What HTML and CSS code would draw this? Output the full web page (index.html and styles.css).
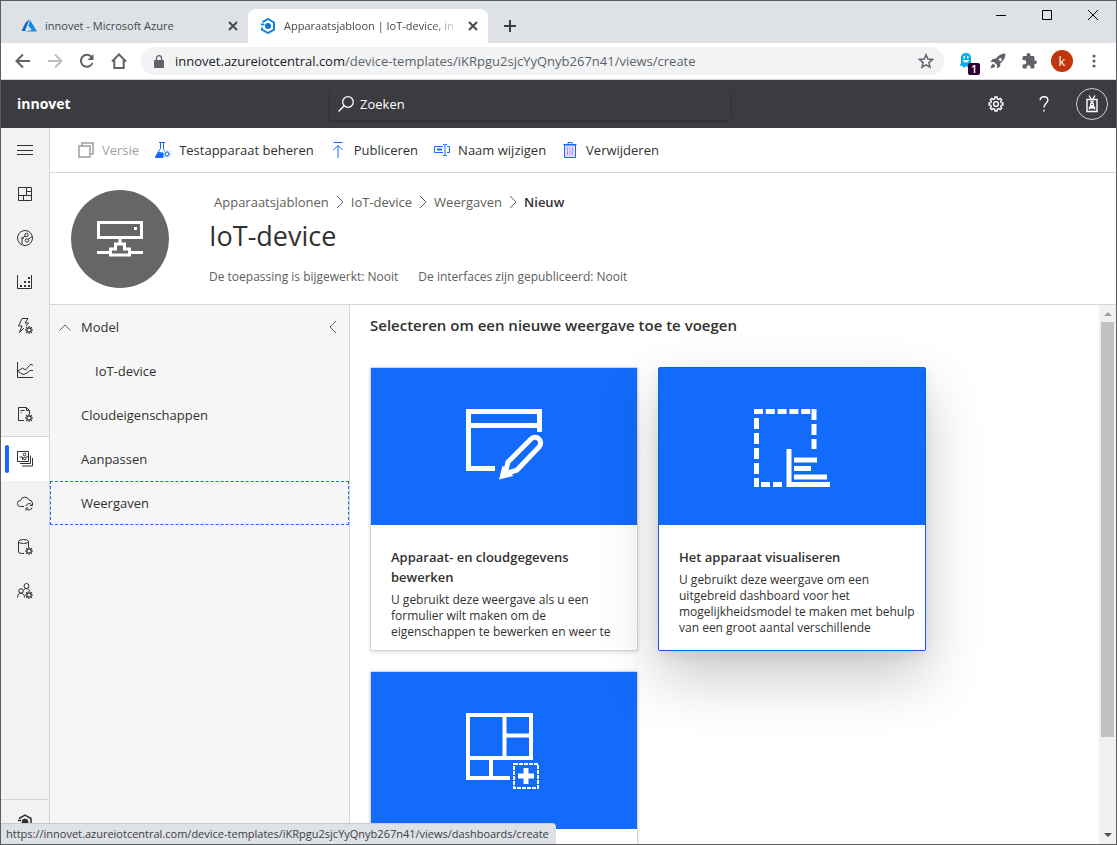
FILE: index.html
```html
<!DOCTYPE html>
<html lang="nl">
<head>
    <meta charset="UTF-8">
    <meta name="viewport" content="width=device-width, initial-scale=1.0">
    <title>Apparaatsjabloon | IoT-device, innovet</title>
    <link rel="stylesheet" href="styles.css">
</head>
<body>
    <svg class="defs" aria-hidden="true">
        <symbol id="gear" viewBox="0 0 16 16">
            <path d="M7 1h2l.4 1.9 1.3.5 1.6-1 1.4 1.4-1 1.6.5 1.3L15 7v2l-1.8.3-.5 1.3 1 1.6-1.4 1.4-1.6-1-1.3.6L9 15H7l-.4-1.8-1.3-.6-1.6 1-1.4-1.4 1-1.6-.5-1.3L1 9V7l1.8-.3.5-1.3-1-1.6 1.4-1.4 1.6 1 1.3-.5z"/>
            <circle cx="8" cy="8" r="2.4"/>
        </symbol>
        <symbol id="cog" viewBox="0 0 7 7">
            <circle cx="3.5" cy="3.5" r="1.9"/>
            <path d="M3.5 0v1.4M3.5 5.6V7M0 3.5h1.4M5.6 3.5H7M1 1l1 1M5 5l1 1M6 1L5 2M2 5L1 6"/>
        </symbol>
        <symbol id="chevron" viewBox="0 0 8 14"><path d="M1 1l6 6-6 6"/></symbol>
        <symbol id="close" viewBox="0 0 10 10"><path d="M1 1l8 8M9 1L1 9"/></symbol>
    </svg>

    <div class="tabs">
        <div class="tab">
            <svg class="favicon" viewBox="0 0 16 16"><path fill="#0f6cc0" d="M8.500 1L4.300 5 .5 13h3.500z"/><path fill="#1a8ae0" d="M9.100 2L7.300 7.400l3.500 4.600L4 13.500h12z"/></svg>
            <span class="tab-title">innovet - Microsoft Azure</span>
            <button class="tab-close" aria-label="Tabblad sluiten"><svg viewBox="0 0 10 10"><use href="#close"/></svg></button>
        </div>
        <div class="tab active">
            <svg class="favicon" viewBox="0 0 16 16"><path d="M2 9.500V11.600L8 15l6-3.400V4.500L8 1 2.500 4.200"/><path d="M1 6.500h3.500"/><circle cx="8" cy="8" r="3" fill="#0b76d8" stroke="none"/></svg>
            <span class="tab-title">Apparaatsjabloon | IoT-device, in</span>
            <button class="tab-close" aria-label="Tabblad sluiten"><svg viewBox="0 0 10 10"><use href="#close"/></svg></button>
        </div>
        <button class="new-tab" aria-label="Nieuw tabblad"><svg viewBox="0 0 12 12"><path d="M6 0v12M0 6h12"/></svg></button>
        <div class="window-buttons">
            <button aria-label="Minimaliseren"><svg viewBox="0 0 10 10"><path d="M0 5.500h10"/></svg></button>
            <button aria-label="Maximaliseren"><svg viewBox="0 0 10 10"><path d="M.5.5h9v9h-9z"/></svg></button>
            <button aria-label="Sluiten"><svg viewBox="0 0 10 10"><path d="M0 0l10 10M10 0L0 10"/></svg></button>
        </div>
    </div>

    <div class="browser-bar">
        <button aria-label="Vorige"><svg viewBox="0 0 16 16"><path d="M15 8H2M8 1.500L1.500 8 8 14.500"/></svg></button>
        <button class="off" aria-label="Volgende"><svg viewBox="0 0 16 16"><path d="M1 8h13M8 1.500L14.500 8 8 14.500"/></svg></button>
        <button aria-label="Vernieuwen"><svg viewBox="0 0 16 16"><path d="M13.500 10A6 6 0 1 1 12.600 4"/><path class="solid" d="M14.500 1v6h-6z"/></svg></button>
        <button aria-label="Startpagina"><svg viewBox="0 0 16 16"><path d="M1 8.500L8 1.500l7 7M3.300 7v8h9.400V7"/></svg></button>
        <div class="address">
            <svg class="lock" viewBox="0 0 10 13"><path d="M1 5h8a1 1 0 0 1 1 1v6a1 1 0 0 1-1 1H1a1 1 0 0 1-1-1V6a1 1 0 0 1 1-1z" fill="#5f6368"/><path d="M2.500 5V3.200a2.500 2.500 0 0 1 5 0V5" fill="none" stroke="#5f6368" stroke-width="1.300"/></svg>
            <span class="url"><b>innovet.azureiotcentral.com</b>/device-templates/iKRpgu2sjcYyQnyb267n41/views/create</span>
            <button aria-label="Bladwijzer"><svg viewBox="0 0 16 16"><path d="M8 1.800l1.800 4.300 4.700.4-3.600 3.100 1.100 4.600L8 11.800l-4 2.400 1.100-4.600L1.500 6.500l4.700-.4z"/></svg></button>
        </div>
        <div class="extensions">
            <button class="ghost" aria-label="Ghostery"><svg viewBox="0 0 14 16"><path fill="#00aef0" d="M7 0C3.500 0 2 2.300 2 5v5L.5 13 3 12.500 5 15l2-2 2.500 1.500L12 13V5c0-2.700-1.500-5-5-5z"/><path fill="#fff" d="M4.500 3h1.500v2.500H4.500zM8 3h1.500v2.500H8zM4 7h6c0 1.500-1.200 2.500-3 2.500S4 8.500 4 7z"/></svg><span class="badge">1</span></button>
            <button aria-label="Raket"><svg class="fill" viewBox="0 0 16 16"><path fill-rule="evenodd" d="M15.500.5C11 .5 8 2.500 6 5.500L2.500 6 .5 9 4 9l3 3v3.500l3-2 .5-3.500c3-2 5-5 5-9.500zM9.200 5.500a1.500 1.500 0 1 0 2.600 1.200 1.500 1.500 0 0 0-2.600-1.200z"/><path d="M3 10.500C1.500 11.500 1 13.500.5 15.500c2-.5 4-1 5-2.500z"/></svg></button>
            <button aria-label="Extensies"><svg class="fill" viewBox="0 0 16 16"><path d="M13.500 7.500h-1v-3c0-.8-.7-1.500-1.500-1.500H8.500V2a2 2 0 0 0-4 0v1H2c-.8 0-1.500.7-1.500 1.500V7H2a2 2 0 0 1 0 4.500H.5V14c0 .8.700 1.500 1.500 1.500h2.700V14.200a1.900 1.900 0 0 1 3.800 0v1.300H11c.8 0 1.500-.7 1.500-1.500v-3h1a1.800 1.800 0 0 0 0-3.500z"/></svg></button>
            <button class="profile">k</button>
            <button aria-label="Menu"><svg class="fill" viewBox="0 0 16 16"><circle cx="8" cy="3" r="1.600"/><circle cx="8" cy="8" r="1.600"/><circle cx="8" cy="13" r="1.600"/></svg></button>
        </div>
    </div>

    <header class="app-header">
        <a class="brand" href="#">innovet</a>
        <label class="search">
            <svg viewBox="0 0 16 16"><circle cx="10" cy="6" r="5.300"/><path d="M6.200 9.800L.5 15.500"/></svg>
            <input type="text" placeholder="Zoeken" aria-label="Zoeken">
        </label>
        <div class="header-actions">
            <button aria-label="Instellingen"><svg viewBox="0 0 16 16"><use href="#gear"/></svg></button>
            <button aria-label="Help"><svg viewBox="0 0 16 16"><path d="M4.200 4.200C4.200 2 5.700.7 8 .7s3.900 1.300 3.900 3.400c0 3-3.900 3.400-3.900 7.400M8 13.700v1.800"/></svg></button>
            <button class="account" aria-label="Account"><svg viewBox="0 0 16 18"><path d="M3 4.500h10v12H3zM5 .5l2.500 4M11 .5l-2.500 4M6.500 6.500h3"/><path d="M5.500 14.500v-2l1-1h3l1 1v2M6.500 13h3"/><circle cx="8" cy="9.500" r="1.500"/></svg></button>
        </div>
    </header>

    <div class="app">
        <nav class="rail">
            <a href="#" aria-label="Menu"><svg viewBox="0 0 16 16"><path d="M0 3.500h16M0 8.500h16M0 12.500h16"/></svg></a>
            <a href="#" aria-label="Dashboard"><svg viewBox="0 0 16 16"><path d="M1.500 1.500h13v13h-13zM9.500 1.500v8M1.500 9.500h13M9.500 5.500h5M6.500 9.500v5"/></svg></a>
            <a href="#" aria-label="Apparaten"><svg viewBox="0 0 16 16"><circle cx="8" cy="8" r="7.500"/><circle cx="9.500" cy="5" r="1.700"/><circle cx="10" cy="10.500" r="1.700"/><path d="M8 6L5 8.500V14M4 8h3M11.200 9.200L15 6.500"/></svg></a>
            <a href="#" aria-label="Apparaatgroepen"><svg viewBox="0 0 16 16"><path d="M.5 1v13.500h14V1"/><path stroke-width="2" d="M3 12h2M7 12h2M11 12h2M7 8h2M11 8h2M11 4h2"/></svg></a>
            <a href="#" aria-label="Regels"><svg viewBox="0 0 16 16"><path d="M5 .5h6L8 5h3.500L9 8M5 .5L1.500 8H5l-2.500 6.500L7 10"/><use href="#cog" x="8" y="8" width="8" height="8"/></svg></a>
            <a href="#" aria-label="Analyse"><svg viewBox="0 0 16 16"><path d="M.5 0v15.500H16M1 9l4.500-3 3 2L14 2l2 1.500M1 9.500l5 3 3-1 4-3h3"/></svg></a>
            <a href="#" aria-label="Taken"><svg viewBox="0 0 16 16"><path d="M7 14.500H1.500v-13h8l3 3V8M9.500 1.500v3h3M3.500 4.500h4M3.500 6.500h1"/><use href="#cog" x="8" y="8" width="8" height="8"/></svg></a>
            <a class="current" href="#" aria-label="Apparaatsjablonen"><svg viewBox="0 0 16 16"><path d="M.5.500h11v10H.5zM3 12.500h10.500v-8M5 15h10.500V7"/><circle cx="7.500" cy="3.500" r="1.300"/><circle cx="7.800" cy="7.500" r="1.300"/><path d="M2.500 6h3v3M9 6.500l2-1.500"/></svg></a>
            <a href="#" aria-label="Gegevens exporteren"><svg viewBox="0 0 16 16"><path d="M7 11.500H3.500a3 3 0 0 1-.2-6A4.600 4.600 0 0 1 12 5a3.200 3.200 0 0 1 3.300 3M9 11a3.200 3.200 0 0 1 5.800-1M15.500 8v2.500H13M15 12.500a3.200 3.200 0 0 1-5.500 1.500M9 15.500V13h2.500"/></svg></a>
            <a href="#" aria-label="Gegevens"><svg viewBox="0 0 16 16"><ellipse cx="6.500" cy="2.500" rx="5" ry="2"/><path d="M1.500 2.500V13c0 1 2 1.500 5.500 1.500M11.500 2.500V8"/><use href="#cog" x="8" y="8" width="8" height="8"/></svg></a>
            <a href="#" aria-label="Beheer"><svg viewBox="0 0 16 16"><circle cx="9.500" cy="3" r="2.500"/><circle cx="4" cy="8" r="2.300"/><path d="M.5 14.500c0-6 7-6 7 0M6.500 7c1-2 5-2 6.500 1"/><use href="#cog" x="8" y="8" width="8" height="8"/></svg></a>
            <a class="rail-bottom" href="#" aria-label="IoT Central"><svg viewBox="0 0 16 16"><path stroke-width="1.500" d="M2 9.500v2L8 15l6-3.500v-7L8 1 2 4.500M1 6.500h3"/><circle cx="8" cy="8" r="3" fill="#323130"/></svg></a>
        </nav>

        <main>
            <div class="commands">
                <button class="off" disabled><svg viewBox="0 0 16 16"><path stroke-width="1.500" d="M4 3.500V1h11v11h-3M1 4h11v11H1z"/></svg>Versie</button>
                <button><svg viewBox="0 0 16 16"><path d="M4 .5h6M5.500.5v6l-5 8.500H8M8.500.5v6l1 2"/><path d="M3 10.500L.5 15.500H8V11z" fill="#136bfb"/><use href="#cog" x="8" y="8.500" width="8" height="7"/></svg>Testapparaat beheren</button>
                <button><svg viewBox="0 0 16 16"><path d="M3.500.5h9M8 3.500V16M3.500 8L8 3.500 12.500 8"/></svg>Publiceren</button>
                <button><svg viewBox="0 0 16 16"><path d="M9 4.500H.5v6H9M13 4.500h2.500v6H13M9 2.500h1.500l.5.500.5-.5H13M11 3v10M9 13.500h1.500l.5-.5.5.5H13"/><path stroke-width="2" d="M3 7.500h5"/></svg>Naam wijzigen</button>
                <button><svg viewBox="0 0 16 16"><path fill="#e4dcff" d="M2.500 3h11v12.500h-11z"/><path d="M1.500 2.500h13M6 2V.5h4V2"/><path stroke="#b48cff" d="M5.500 5v8M8 5v8M10.500 5v8"/></svg>Verwijderen</button>
            </div>

            <section class="device">
                <div class="device-picture">
                    <svg viewBox="0 0 46 36"><path d="M1.500 1.500h43v15h-43zM23 17v6M0 31.500h13M33 31.500h13M13.500 34v-6h5v-5h9v5h5v6z"/><path d="M37 7.500h3"/></svg>
                </div>
                <div>
                    <div class="breadcrumb">
                        <a href="#">Apparaatsjablonen</a>
                        <svg viewBox="0 0 8 14"><use href="#chevron"/></svg>
                        <a href="#">IoT-device</a>
                        <svg viewBox="0 0 8 14"><use href="#chevron"/></svg>
                        <a href="#">Weergaven</a>
                        <svg viewBox="0 0 8 14"><use href="#chevron"/></svg>
                        <strong>Nieuw</strong>
                    </div>
                    <h1>IoT-device</h1>
                    <div class="device-info">
                        <span>De toepassing is bijgewerkt: Nooit</span>
                        <span>De interfaces zijn gepubliceerd: Nooit</span>
                    </div>
                </div>
            </section>

            <div class="workspace">
                <aside class="model">
                    <div class="model-head">
                        <button class="toggle"><svg viewBox="0 0 12 7"><path d="M.5 6.500L6 1l5.500 5.500"/></svg>Model</button>
                        <button class="collapse" aria-label="Inklappen"><svg viewBox="0 0 8 14"><path d="M7 1L1 7l6 6"/></svg></button>
                    </div>
                    <a class="child" href="#">IoT-device</a>
                    <a href="#">Cloudeigenschappen</a>
                    <a href="#">Aanpassen</a>
                    <a class="focused" href="#">Weergaven</a>
                </aside>

                <section class="views">
                    <h2>Selecteren om een nieuwe weergave toe te voegen</h2>
                    <div class="cards">
                        <a class="card" href="#">
                            <div class="card-picture"><svg viewBox="0 0 80 80"><path stroke-width="5" d="M31 61.500H4.500v-57h71V25"/><path stroke-width="5" d="M4.500 18.500h71"/><path stroke-width="5" d="M41 67l3-12 23-23a5 5 0 0 1 8 8L53 63z"/><path class="tip" d="M35 72.500l3.500-14 11 10.500z"/></svg></div>
                            <div class="card-text">
                                <h3>Apparaat- en cloudgegevens bewerken</h3>
                                <p>U gebruikt deze weergave als u een formulier wilt maken om de eigenschappen te bewerken en weer te</p>
                            </div>
                        </a>
                        <a class="card hovered" href="#">
                            <div class="card-picture"><svg viewBox="0 0 80 80"><path stroke-width="5" stroke-dasharray="9 2.800" d="M2 4.500h57"/><path stroke-width="5" stroke-dasharray="11 4" d="M62 2v40M4.500 11v70"/><path stroke-width="5" stroke-dasharray="9 3" d="M9 77.500h24"/><path stroke-width="5" d="M37 42v35.500h41"/><path stroke-width="5" d="M42 53h23M42 61.500h17M42 70h33"/></svg></div>
                            <div class="card-text">
                                <h3>Het apparaat visualiseren</h3>
                                <p>U gebruikt deze weergave om een uitgebreid dashboard voor het mogelijkheidsmodel te maken met behulp van een groot aantal verschillende</p>
                            </div>
                        </a>
                        <a class="card" href="#" aria-label="Standaardweergaven genereren">
                            <div class="card-picture"><svg viewBox="0 0 80 80"><path stroke-width="4" d="M46 67H4V4h63v43H4M40.500 4v43M40 24.500h27M27 47v20"/><path stroke-width="2" stroke-dasharray="4 1" d="M50 53h24v24H50z"/><path stroke-width="5" d="M62 57v16M54 65h16"/></svg></div>
                        </a>
                    </div>
                </section>

                <div class="scrollbar">
                    <svg viewBox="0 0 8 4"><path d="M0 4l4-4 4 4z" fill="#a3a3a3"/></svg>
                    <div class="thumb"></div>
                    <svg viewBox="0 0 8 4"><path d="M0 0l4 4 4-4z" fill="#505050"/></svg>
                </div>
            </div>
        </main>
    </div>
    <div class="status">https://innovet.azureiotcentral.com/device-templates/iKRpgu2sjcYyQnyb267n41/views/dashboards/create</div>
</body>
</html>
```
FILE: styles.css
```css
* {
    box-sizing: border-box;
}
body {
    font-family: "Segoe UI", "Open Sans", "Noto Sans", sans-serif;
    font-size: 13px;
    line-height: 20px;
    color: #323130;
    margin: 0;
    height: 100vh;
    display: flex;
    flex-direction: column;
    overflow: hidden;
    border: 1px solid #5c5d60;
    background: #fff;
}
svg {
    flex: none;
    display: block;
    width: 16px;
    height: 16px;
    fill: none;
    stroke: currentColor;
}
.defs {
    position: absolute;
    width: 0;
    height: 0;
}
button {
    font: inherit;
    color: inherit;
    background: none;
    border: none;
    padding: 0;
    display: flex;
    align-items: center;
    justify-content: center;
    cursor: pointer;
}
a {
    color: inherit;
    text-decoration: none;
}
h1, h2, h3, p {
    margin: 0;
}

/* browser */
.tabs {
    height: 42px;
    flex: none;
    display: flex;
    padding: 8px 0 0 8px;
    background: #dee1e6;
}
.tab {
    width: 239px;
    display: flex;
    align-items: center;
    gap: 8px;
    padding: 0 10px 0 12px;
    border-radius: 8px 8px 0 0;
    font-size: 11px;
    color: #45494d;
}
.tab.active {
    width: 240px;
    background: #fff;
}
.tab .favicon {
    stroke: none;
}
.tab.active .favicon {
    stroke: #1283e0;
    stroke-width: 2;
}
.tab-title {
    flex: 1;
    white-space: nowrap;
}
.active .tab-title {
    -webkit-mask-image: linear-gradient(to right, #000 84%, transparent);
    mask-image: linear-gradient(to right, #000 84%, transparent);
}
.tab-close svg {
    width: 10px;
    height: 10px;
    stroke-width: 2;
}
.new-tab {
    width: 44px;
    color: #3c4043;
}
.new-tab svg {
    width: 12px;
    height: 12px;
    stroke-width: 2;
}
.window-buttons {
    margin-left: auto;
    display: flex;
    align-items: flex-start;
    color: #000;
}
.window-buttons button {
    width: 46px;
    height: 12px;
}
.window-buttons svg {
    width: 10px;
    height: 10px;
}
.browser-bar {
    height: 37px;
    flex: none;
    display: flex;
    align-items: center;
    padding-left: 6px;
    border-bottom: 1px solid #d5d7da;
    color: #5f6368;
}
.browser-bar > button {
    width: 32px;
}
.browser-bar svg {
    stroke-width: 2;
}
.browser-bar .off {
    color: #babcbe;
}
.browser-bar .solid, .browser-bar .fill {
    fill: #5f6368;
    stroke: none;
}
.address {
    flex: 1;
    height: 28px;
    display: flex;
    align-items: center;
    gap: 11px;
    margin-left: 6px;
    padding: 0 10px 0 13px;
    border-radius: 14px;
    background: #f1f3f4;
}
.address .lock {
    width: 10px;
    height: 13px;
    stroke: none;
}
.address button svg {
    stroke-width: 1.5;
}
.url {
    flex: 1;
    white-space: nowrap;
    overflow: hidden;
}
.url b {
    font-weight: 400;
    color: #202124;
}
.extensions {
    display: flex;
    align-items: center;
    gap: 10px;
    padding: 0 11px;
}
.extensions button {
    width: 22px;
    height: 22px;
}
.ghost {
    position: relative;
}
.ghost svg {
    stroke: none;
}
.badge {
    position: absolute;
    left: 13px;
    top: 13px;
    width: 12px;
    height: 12px;
    border-radius: 2px;
    background: #330033;
    color: #fff;
    font-size: 10px;
    line-height: 12px;
    font-weight: 600;
}
.profile {
    border-radius: 50%;
    background: #bf360c;
    color: #fff;
}

/* app header */
.app-header {
    height: 48px;
    flex: none;
    display: flex;
    align-items: center;
    padding: 0 8px 0 16px;
    background: #3c3b40;
    color: #fff;
}
.brand {
    width: 312px;
    font-size: 14px;
    font-weight: 700;
}
.search {
    width: 401px;
    height: 32px;
    display: flex;
    align-items: center;
    gap: 6px;
    padding: 0 9px;
    border-radius: 2px;
    box-shadow: 0 1px 3px rgba(0, 0, 0, 0.25);
}
.search input {
    flex: 1;
    font: inherit;
    color: #fff;
    background: none;
    border: none;
    outline: none;
    padding: 0;
}
.search input::placeholder {
    color: #fff;
    opacity: 1;
}
.search svg {
    stroke-width: 1.3;
}
.header-actions {
    margin-left: auto;
    display: flex;
    align-items: center;
}
.header-actions button {
    width: 48px;
    height: 32px;
}
.header-actions svg {
    stroke-width: 1.4;
}
.header-actions .account {
    width: 32px;
    margin-left: 8px;
    border: 1px solid #d0d0d0;
    border-radius: 50%;
}
.account svg {
    height: 18px;
}

/* left rail */
.app {
    flex: 1;
    min-height: 0;
    display: flex;
}
.rail {
    width: 49px;
    flex: none;
    display: flex;
    flex-direction: column;
    background: #f3f2f1;
    border-right: 1px solid #d6d6d6;
}
.rail a {
    height: 44px;
    flex: none;
    display: flex;
    align-items: center;
    justify-content: center;
}
.rail .current {
    height: 45px;
    position: relative;
    border-top: 1px solid #d6d6d6;
    background: #fff;
}
.rail .current::before {
    content: "";
    position: absolute;
    left: 4px;
    top: 8px;
    width: 4px;
    height: 28px;
    border-radius: 2px;
    background: #136bfb;
}
.rail .rail-bottom {
    height: 45px;
    margin-top: auto;
    border-top: 1px solid #d6d6d6;
}

/* page */
main {
    flex: 1;
    min-width: 0;
    display: flex;
    flex-direction: column;
}
.commands {
    height: 45px;
    flex: none;
    display: flex;
    gap: 16px;
    padding-left: 28px;
    border-bottom: 1px solid #d6d6d6;
}
.commands button {
    gap: 8px;
}
.commands svg {
    color: #136bfb;
}
.commands .off, .commands .off svg {
    color: #a19f9d;
}
.device {
    height: 132px;
    flex: none;
    display: flex;
    padding: 17px 21px 0;
    gap: 40px;
    border-bottom: 1px solid #d6d6d6;
}
.device-picture {
    width: 98px;
    height: 98px;
    flex: none;
    display: flex;
    align-items: center;
    justify-content: center;
    border-radius: 50%;
    background: #666;
    color: #fff;
}
.device-picture svg {
    width: 46px;
    height: 36px;
    stroke-width: 3;
}
.breadcrumb {
    display: flex;
    align-items: center;
    gap: 7px;
    margin: 2px 0 0 5px;
    color: #605e5c;
}
.breadcrumb svg {
    width: 8px;
    height: 14px;
}
.breadcrumb strong {
    font-weight: 600;
    color: #323130;
}
h1 {
    font-size: 27px;
    line-height: 36px;
    font-weight: 400;
    margin-top: 6px;
}
.device-info {
    display: flex;
    gap: 20px;
    margin-top: 13px;
    font-size: 12px;
    color: #605e5c;
}
.workspace {
    flex: 1;
    min-height: 0;
    display: flex;
}
.model {
    width: 300px;
    flex: none;
    background: #f6f6f6;
    border-right: 1px solid #d6d6d6;
}
.model-head {
    display: flex;
    justify-content: space-between;
    padding: 0 12px 0 9px;
}
.model-head button {
    height: 44px;
}
.model-head svg {
    color: #605e5c;
}
.toggle {
    gap: 10px;
}
.toggle svg {
    width: 12px;
    height: 7px;
}
.collapse svg {
    width: 8px;
    height: 14px;
}
.model a {
    display: block;
    padding: 11px 30px;
    border: 1px dashed transparent;
    line-height: 20px;
}
.model .child {
    padding-left: 44px;
}
.model .focused {
    border-color: #136bfb;
}
.views {
    flex: 1;
    overflow: hidden;
    padding: 9px 20px 0;
}
h2 {
    font-size: 15px;
    font-weight: 600;
    line-height: 22px;
}
.cards {
    display: flex;
    flex-wrap: wrap;
    gap: 20px;
    margin-top: 31px;
}
.card {
    width: 268px;
    height: 284px;
    border: 1px solid #d6d6d6;
    border-radius: 2px;
    background: #fff;
    box-shadow: 0 1px 4px rgba(0, 0, 0, 0.14);
}
.card.hovered {
    position: relative;
    border-color: #0b63ce;
    box-shadow: 0 26px 58px rgba(0, 0, 0, 0.22), 0 5px 14px rgba(0, 0, 0, 0.06);
}
.card-picture {
    height: 157px;
    display: flex;
    align-items: center;
    justify-content: center;
    background: #136bfb;
    color: #fff;
}
.card-picture svg {
    width: 80px;
    height: 80px;
}
.card-picture .tip {
    fill: #fff;
    stroke: none;
}
.card-text {
    padding: 22px 10px 0 20px;
}
h3 {
    font-size: 13px;
    font-weight: 600;
    line-height: 20px;
}
.card-text p {
    margin-top: 5px;
    font-size: 12px;
    line-height: 16px;
}
.scrollbar {
    width: 17px;
    flex: none;
    display: flex;
    flex-direction: column;
    align-items: center;
    padding: 7px 0;
    background: #f1f1f1;
}
.scrollbar svg {
    width: 8px;
    height: 4px;
    stroke: none;
}
.thumb {
    width: 13px;
    height: 79%;
    margin: 6px 0 auto;
    background: #c1c1c1;
}
.status {
    position: fixed;
    left: 1px;
    bottom: 1px;
    padding: 0 7px 0 5px;
    border-radius: 0 4px 0 0;
    border-top: 1px solid #c8cacd;
    background: #dee1e6;
    font-size: 11px;
    color: #3c4043;
}
```
